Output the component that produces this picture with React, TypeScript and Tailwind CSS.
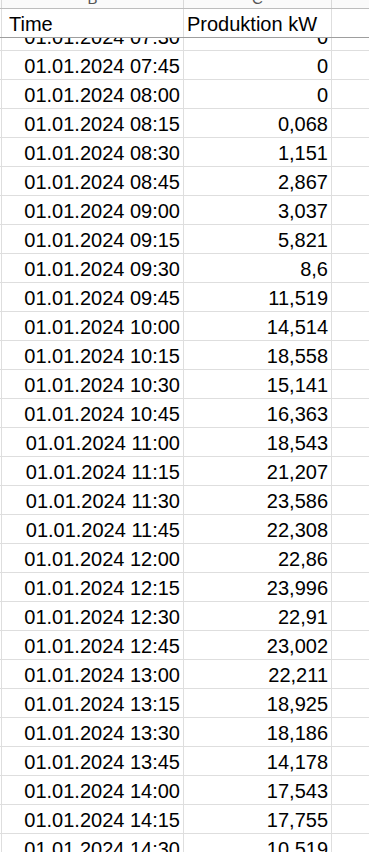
const rows: [string, string][] = [
  ['07:30', '0'],
  ['07:45', '0'],
  ['08:00', '0'],
  ['08:15', '0,068'],
  ['08:30', '1,151'],
  ['08:45', '2,867'],
  ['09:00', '3,037'],
  ['09:15', '5,821'],
  ['09:30', '8,6'],
  ['09:45', '11,519'],
  ['10:00', '14,514'],
  ['10:15', '18,558'],
  ['10:30', '15,141'],
  ['10:45', '16,363'],
  ['11:00', '18,543'],
  ['11:15', '21,207'],
  ['11:30', '23,586'],
  ['11:45', '22,308'],
  ['12:00', '22,86'],
  ['12:15', '23,996'],
  ['12:30', '22,91'],
  ['12:45', '23,002'],
  ['13:00', '22,211'],
  ['13:15', '18,925'],
  ['13:30', '18,186'],
  ['13:45', '14,178'],
  ['14:00', '17,543'],
  ['14:15', '17,755'],
  ['14:30', '10,519'],
  ['14:45', '9,884'],
]

export default function App() {
  return (
    <div
      className="flex h-[852px] w-[369px] flex-col overflow-hidden bg-white text-[20px] text-black"
      style={{ fontFamily: '"Liberation Sans", Arial, sans-serif' }}
    >
      {/* column letters, scrolled almost out of view */}
      <div className="flex h-[9px] shrink-0 overflow-hidden border-b border-[#bdbdbd] bg-[#fafafa] text-[15px] text-[#555]">
        <div className="w-[2px] shrink-0 border-r border-[#d9d9d9]" />
        <div className="flex w-[182px] shrink-0 items-end justify-center border-r border-[#d9d9d9] pb-[1px] leading-[17px]">
          B
        </div>
        <div className="flex w-[148px] shrink-0 items-end justify-center border-r border-[#d9d9d9] pb-[1px] leading-[17px]">
          C
        </div>
        <div className="flex-1" />
      </div>

      {/* frozen header row */}
      <div className="flex h-[29px] shrink-0 border-b border-[#9e9e9e]">
        <div className="w-[2px] shrink-0 border-r border-[#dedede]" />
        <div className="flex w-[182px] shrink-0 items-end border-r border-[#dedede] pb-[1px] pl-[7px] leading-[23px]">
          Time
        </div>
        <div className="flex w-[148px] shrink-0 items-end border-r border-[#dedede] pb-[1px] pl-[3px] leading-[23px]">
          Produktion kW
        </div>
        <div className="flex-1" />
      </div>

      {/* data rows */}
      <div className="flex-1 overflow-hidden">
        <div className="-mt-[16px]">
          {rows.map(([time, value]) => (
            <div key={time} className="flex h-[29px] border-b border-[#dedede]">
              <div className="w-[2px] shrink-0 border-r border-[#dedede]" />
              <div className="flex w-[182px] shrink-0 items-end justify-end overflow-hidden border-r border-[#dedede] pb-[1px] pr-[3px] leading-[23px] whitespace-nowrap">
                01.01.2024 {time}
              </div>
              <div className="flex w-[148px] shrink-0 items-end justify-end border-r border-[#dedede] pb-[1px] pr-[3px] leading-[23px]">
                {value}
              </div>
              <div className="flex-1" />
            </div>
          ))}
        </div>
      </div>
    </div>
  )
}
